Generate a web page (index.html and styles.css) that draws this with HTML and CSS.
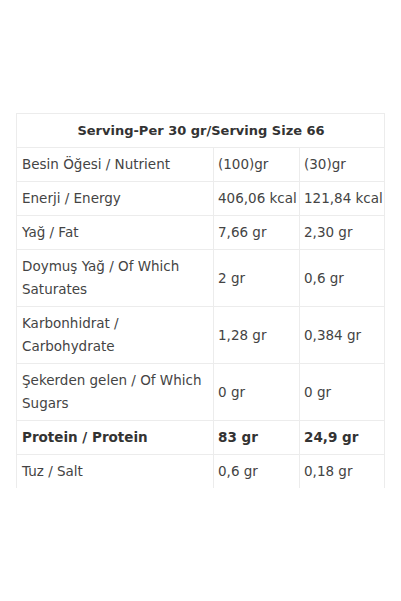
FILE: index.html
```html
<!DOCTYPE html>
<html>
<head>
<meta charset="utf-8">
<link rel="stylesheet" href="styles.css">
</head>
<body>
<div class="wrap">
<table class="nutri">
  <colgroup><col class="c1"><col class="c2"><col class="c3"></colgroup>
  <tr><th colspan="3" class="head">Serving-Per 30 gr/Serving Size 66</th></tr>
  <tr><td>Besin Öğesi / Nutrient</td><td class="num">(100)gr</td><td class="num">(30)gr</td></tr>
  <tr><td>Enerji / Energy</td><td class="num">406,06 kcal</td><td class="num">121,84 kcal</td></tr>
  <tr><td>Yağ / Fat</td><td class="num">7,66 gr</td><td class="num">2,30 gr</td></tr>
  <tr><td>Doymuş Yağ / Of Which Saturates</td><td class="num">2 gr</td><td class="num">0,6 gr</td></tr>
  <tr><td>Karbonhidrat / Carbohydrate</td><td class="num">1,28 gr</td><td class="num">0,384 gr</td></tr>
  <tr><td>Şekerden gelen / Of Which Sugars</td><td class="num">0 gr</td><td class="num">0 gr</td></tr>
  <tr class="bold"><td>Protein / Protein</td><td class="num">83 gr</td><td class="num">24,9 gr</td></tr>
  <tr class="last"><td>Tuz / Salt</td><td class="num">0,6 gr</td><td class="num">0,18 gr</td></tr>
</table>
</div>
</body>
</html>
```

FILE: styles.css
```css
html, body {
  margin: 0;
  padding: 0;
  background: #ffffff;
}
.wrap {
  padding: 113px 16px 0 16px;
  width: 369px;
}
.nutri {
  border-collapse: collapse;
  width: 368px;
  table-layout: fixed;
  font-family: "DejaVu Sans", sans-serif;
  font-size: 13.5px;
  color: #444444;
}
.nutri th, .nutri td {
  border: 1px solid #ececec;
  padding: 5px 4px 5px 5px;
  line-height: 23px;
  text-align: left;
  vertical-align: middle;
  font-weight: normal;
  overflow: hidden;
}
.nutri .num {
  white-space: nowrap;
  padding-left: 4px;
}
.nutri .head {
  text-align: center;
  font-weight: bold;
  font-size: 13px;
  color: #333333;
}
.c1 { width: 197px; }
.c2 { width: 86px; }
.c3 { width: 85px; }
.bold td {
  font-weight: bold;
  color: #333333;
}
.last td {
  border-bottom: none;
}
```
